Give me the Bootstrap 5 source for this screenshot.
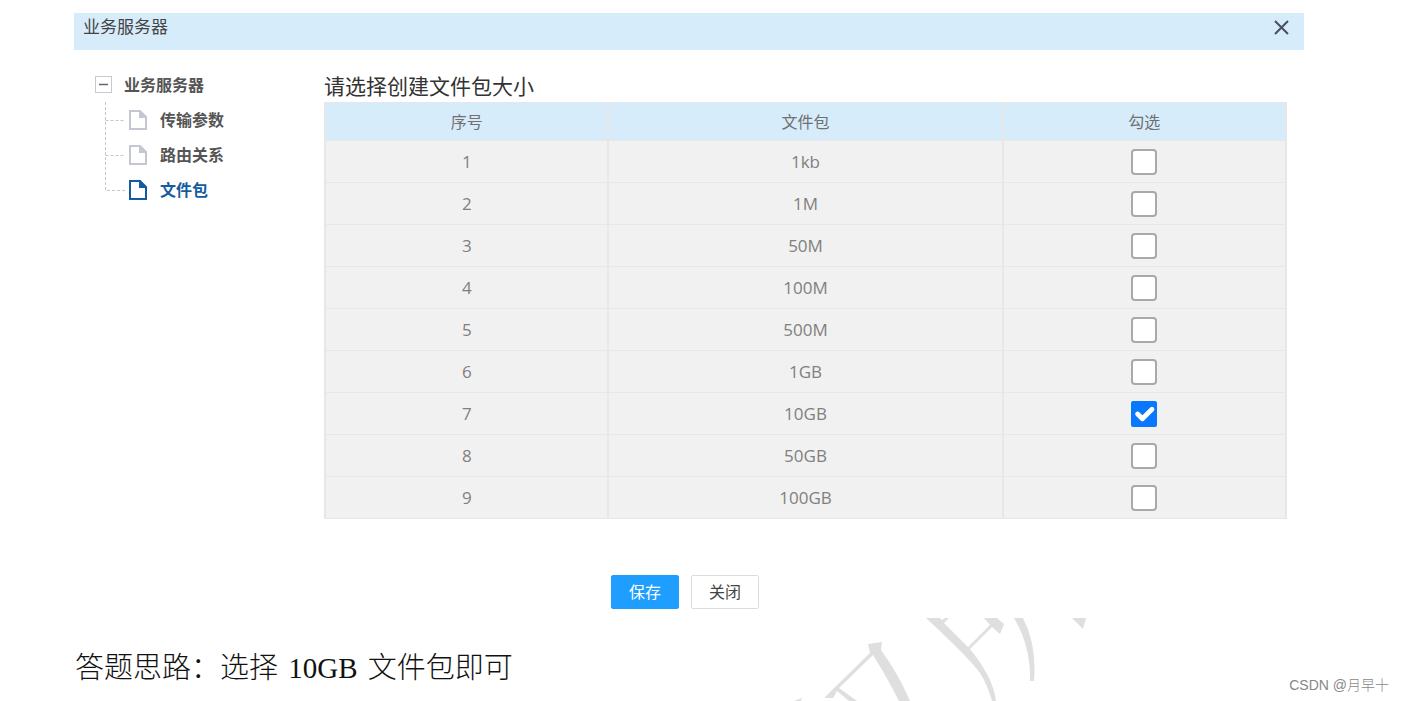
<!DOCTYPE html>
<html lang="zh-CN">
<head>
<meta charset="utf-8">
<meta name="viewport" content="width=device-width, initial-scale=1">
<title>业务服务器</title>
<link href="https://cdn.jsdelivr.net/npm/bootstrap@5.3.0/dist/css/bootstrap.min.css" rel="stylesheet">
<style>
  body { font-family: "Open Sans", "Noto Sans CJK SC", sans-serif; font-size: 16px; color: #444; background: #fff; }
  .sheet { min-height: 100vh; padding: 13px 100px 0 74px; overflow: hidden; }
  .dialog-head { background: #d7ecfb; height: 37px; padding: 0 14px 0 9px; font-size: 17px; line-height: 27px; }
  .close-x { line-height: 0; padding: 6px 0; width: 17px; }
  .side-tree { width: 250px; padding: 17px 0 0 21px; font-weight: 700; color: #555; }
  .tree-root, .tree-item { height: 35px; }
  .toggle-box { width: 17px; height: 17px; border: 1px solid #c6c9d2; line-height: 0; }
  .tree-item { padding-left: 10px; color: #555; }
  .tree-item.current { color: #145ba0; }
  .branch { stroke: #c4c7cc; stroke-dasharray: 3 2; fill: none; }
  .page-icon { fill: none; stroke: #c3c7d0; stroke-width: 2; margin: 0 13px 0 4px; }
  .page-icon .fold { fill: #c3c7d0; stroke: none; }
  .current .page-icon { stroke: #145ba0; }
  .current .page-icon .fold { fill: #145ba0; }
  .main-pane { padding: 20px 17px 0 0; }
  .pane-title { font-size: 21px; line-height: 32px; font-weight: 400; color: #333; }
  .size-table { table-layout: fixed; border: 1px solid #e7e7e7; color: #808080; text-align: center; }
  .size-table th, .size-table td { padding: 0; border: 1px solid #e7e7e7; border-width: 1px 2px; vertical-align: middle; }
  .size-table th { height: 38px; background: #d7ecfb; color: #707070; font-weight: 400; font-size: 16px; }
  .size-table td { height: 42px; background: #f1f1f1; font-size: 17px; }
  .size-table .outer { width: 29.5%; }
  .size-table .form-check-input { display: block; width: 26px; height: 26px; margin: 0 auto; border: 2px solid #a9a9a9; border-radius: 4px; }
  .size-table .form-check-input:checked { background-color: #0879ff; background-size: 32px; border-color: #0879ff; border-radius: 2px; }
  .actions { padding: 56px 8px 0 0; gap: 12px; }
  .act { width: 68px; height: 34px; padding: 0; border-radius: 2px; font-size: 16px; --bs-btn-color: #444; --bs-btn-border-color: #dcdcdc; --bs-btn-bg: #fff; }
  .act-save { --bs-btn-color: #fff; --bs-btn-bg: #1e9fff; --bs-btn-border-color: #1e9fff; }
  .answer { margin: 37px 0 0 1px; font: 300 29px/44px "Liberation Serif", "Noto Sans CJK SC", serif; color: #111; }
  .answer strong { font-weight: 400; padding: 0 3px; }
  .stamp { right: 312px; bottom: 0; fill: #dfdfdf; }
  .credit { right: 15px; bottom: 6px; font: 300 14px/20px "Liberation Sans", "Noto Sans CJK SC", sans-serif; color: #888; }
</style>
</head>
<body>
<div class="sheet position-relative">
  <header class="dialog-head d-flex justify-content-between align-items-start">
    <span>业务服务器</span>
    <button type="button" class="close-x btn border-0" aria-label="关闭窗口">
      <svg width="17" height="17" viewBox="0 0 17 17"><path d="M2 2 15 15M15 2 2 15" stroke="#4c4d60" stroke-width="2"/></svg>
    </button>
  </header>

  <div class="d-flex">
    <nav class="side-tree flex-shrink-0" aria-label="业务服务器">
      <div class="tree-root d-flex align-items-center">
        <button type="button" class="toggle-box btn p-0 rounded-0 me-2" aria-label="收起">
          <svg width="15" height="15"><path d="M3 7.5h9" stroke="#666" stroke-width="1.5"/></svg>
        </button>
        <span class="ms-1">业务服务器</span>
      </div>
      <a href="#" class="tree-item d-flex align-items-center text-decoration-none">
        <svg width="20" height="35"><path class="branch" d="M.5 0V35M.5 18.5H20"/></svg>
        <svg class="page-icon" width="18" height="20"><path d="M1 1H11L17 7V19H1Z"/><path class="fold" d="M10 0 18 8H10Z"/></svg>
        传输参数
      </a>
      <a href="#" class="tree-item d-flex align-items-center text-decoration-none">
        <svg width="20" height="35"><path class="branch" d="M.5 0V35M.5 18.5H20"/></svg>
        <svg class="page-icon" width="18" height="20"><path d="M1 1H11L17 7V19H1Z"/><path class="fold" d="M10 0 18 8H10Z"/></svg>
        路由关系
      </a>
      <a href="#" class="tree-item current d-flex align-items-center text-decoration-none" aria-current="page">
        <svg width="20" height="35"><path class="branch" d="M.5 0V18.5H20"/></svg>
        <svg class="page-icon" width="18" height="20"><path d="M1 1H11L17 7V19H1Z"/><path class="fold" d="M10 0 18 8H10Z"/></svg>
        文件包
      </a>
    </nav>

    <main class="main-pane flex-grow-1">
      <h1 class="pane-title m-0">请选择创建文件包大小</h1>
      <table class="size-table w-100">
        <thead>
          <tr><th class="outer" scope="col">序号</th><th scope="col">文件包</th><th class="outer" scope="col">勾选</th></tr>
        </thead>
        <tbody>
          <tr><td>1</td><td>1kb</td><td><input class="form-check-input" type="checkbox" aria-label="1kb"></td></tr>
          <tr><td>2</td><td>1M</td><td><input class="form-check-input" type="checkbox" aria-label="1M"></td></tr>
          <tr><td>3</td><td>50M</td><td><input class="form-check-input" type="checkbox" aria-label="50M"></td></tr>
          <tr><td>4</td><td>100M</td><td><input class="form-check-input" type="checkbox" aria-label="100M"></td></tr>
          <tr><td>5</td><td>500M</td><td><input class="form-check-input" type="checkbox" aria-label="500M"></td></tr>
          <tr><td>6</td><td>1GB</td><td><input class="form-check-input" type="checkbox" aria-label="1GB"></td></tr>
          <tr><td>7</td><td>10GB</td><td><input class="form-check-input" type="checkbox" aria-label="10GB" checked></td></tr>
          <tr><td>8</td><td>50GB</td><td><input class="form-check-input" type="checkbox" aria-label="50GB"></td></tr>
          <tr><td>9</td><td>100GB</td><td><input class="form-check-input" type="checkbox" aria-label="100GB"></td></tr>
        </tbody>
      </table>
    </main>
  </div>

  <div class="actions d-flex justify-content-center">
    <button type="button" class="act act-save btn">保存</button>
    <button type="button" class="act btn">关闭</button>
  </div>

  <p class="answer mb-0">答题思路：选择 <strong>10GB</strong> 文件包即可</p>

  <!-- slanted brush strokes behind the foot of the page -->
  <svg class="stamp position-absolute" width="312" height="84" viewBox="0 0 312 84" aria-hidden="true">
    <path d="M14 84 22 81 21 84Z"/>
    <path d="M45 80 90 36 88 27 102 25 101 33Q119 58 130 84H119Q108 62 93 38L59 71 77 84H69L57 74 53 81H45Z"/>
    <path d="M146 1H160L162 3 165 1H169L164 6 188 30 210 8 204 1H217L224 7 220 17 212 10 190 32Q213 60 216 84H212Q207 67 200 56Q189 41 146 1Z"/>
    <path d="M234 1H243Q257 28 254 64H250Q251 30 234 1Z"/>
    <path d="M292 1H306L303 12Z"/>
  </svg>
  <span class="credit position-absolute">CSDN @月早十</span>
</div>
<script src="https://cdn.jsdelivr.net/npm/bootstrap@5.3.0/dist/js/bootstrap.bundle.min.js"></script>
</body>
</html>
